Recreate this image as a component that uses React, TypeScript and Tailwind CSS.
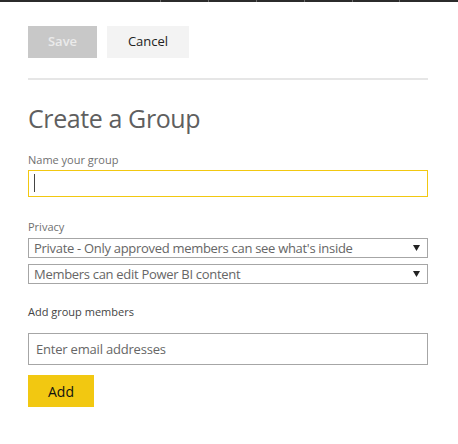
import { useState } from 'react';

const font = { fontFamily: '"Open Sans", "Noto Sans", sans-serif' };

function TopStrip() {
    const seps = [160, 208, 256, 304, 352, 399];
    return (
        <div className="relative h-[2px] w-full bg-[#2b2b2b]">
            {seps.map((x) => (
                <div key={x} className="absolute top-0 h-[2px] w-px bg-[#6a6a6a]" style={{ left: x }} />
            ))}
        </div>
    );
}

function Caret() {
    return (
        <svg width="7" height="6" viewBox="0 0 7 6" className="shrink-0">
            <path d="M0 0h7L3.5 6z" fill="#222" />
        </svg>
    );
}

function FakeSelect({ value }: { value: string }) {
    return (
        <div className="flex h-5 w-[400px] items-center justify-between border border-[#a6a6a6] pl-[5px] pr-[7px]">
            <span className="text-[13px] leading-none tracking-[-0.3px] text-[#666]">{value}</span>
            <Caret />
        </div>
    );
}

export default function App() {
    const [name, setName] = useState('');
    const [email, setEmail] = useState('');

    return (
        <div className="min-h-[444px] w-[458px] bg-white" style={font}>
            <TopStrip />
            <div className="px-[28px]">
                <div className="mt-[24px] flex gap-[10px]">
                    <button className="h-8 w-[69px] bg-[#c8c8c8] text-[13px] font-semibold text-[#ebebeb]">Save</button>
                    <button className="h-8 w-[82px] bg-[#f3f3f3] text-[13px] text-[#222]">Cancel</button>
                </div>
                <div className="mt-5 h-[2px] w-[400px] bg-[#e6e6e6]" />

                <h1 className="mt-[22px] text-[25px] leading-8 tracking-[-0.4px] text-[#5f5f5f]">Create a Group</h1>

                <label className="mt-[18px] block text-[11px] leading-4 text-[#707070]">Name your group</label>
                <input
                    value={name}
                    onChange={(e) => setName(e.target.value)}
                    className="mt-[2px] block h-[27px] w-[400px] border border-[#f2c811] px-[6px] text-[13px] outline-none"
                />
                <div className="relative -mt-[23px] ml-[6px] h-[18px] w-px bg-[#444]" />

                <div className="mt-[27px] text-[11px] leading-4 text-[#707070]">Privacy</div>
                <div className="mt-[3px] flex flex-col gap-[6px]">
                    <FakeSelect value="Private - Only approved members can see what's inside" />
                    <FakeSelect value="Members can edit Power BI content" />
                </div>

                <div className="mt-[20px] text-[11px] leading-4 text-[#444]">Add group members</div>
                <input
                    value={email}
                    onChange={(e) => setEmail(e.target.value)}
                    placeholder="Enter email addresses"
                    className="mt-[13px] block h-8 w-[400px] border border-[#a6a6a6] px-[7px] text-[13px] tracking-[-0.2px] text-[#333] outline-none placeholder:text-[#666]"
                />
                <button className="mt-[10px] h-8 w-[66px] bg-[#f2c811] text-[14px] text-[#111]">Add</button>
            </div>
        </div>
    );
}
